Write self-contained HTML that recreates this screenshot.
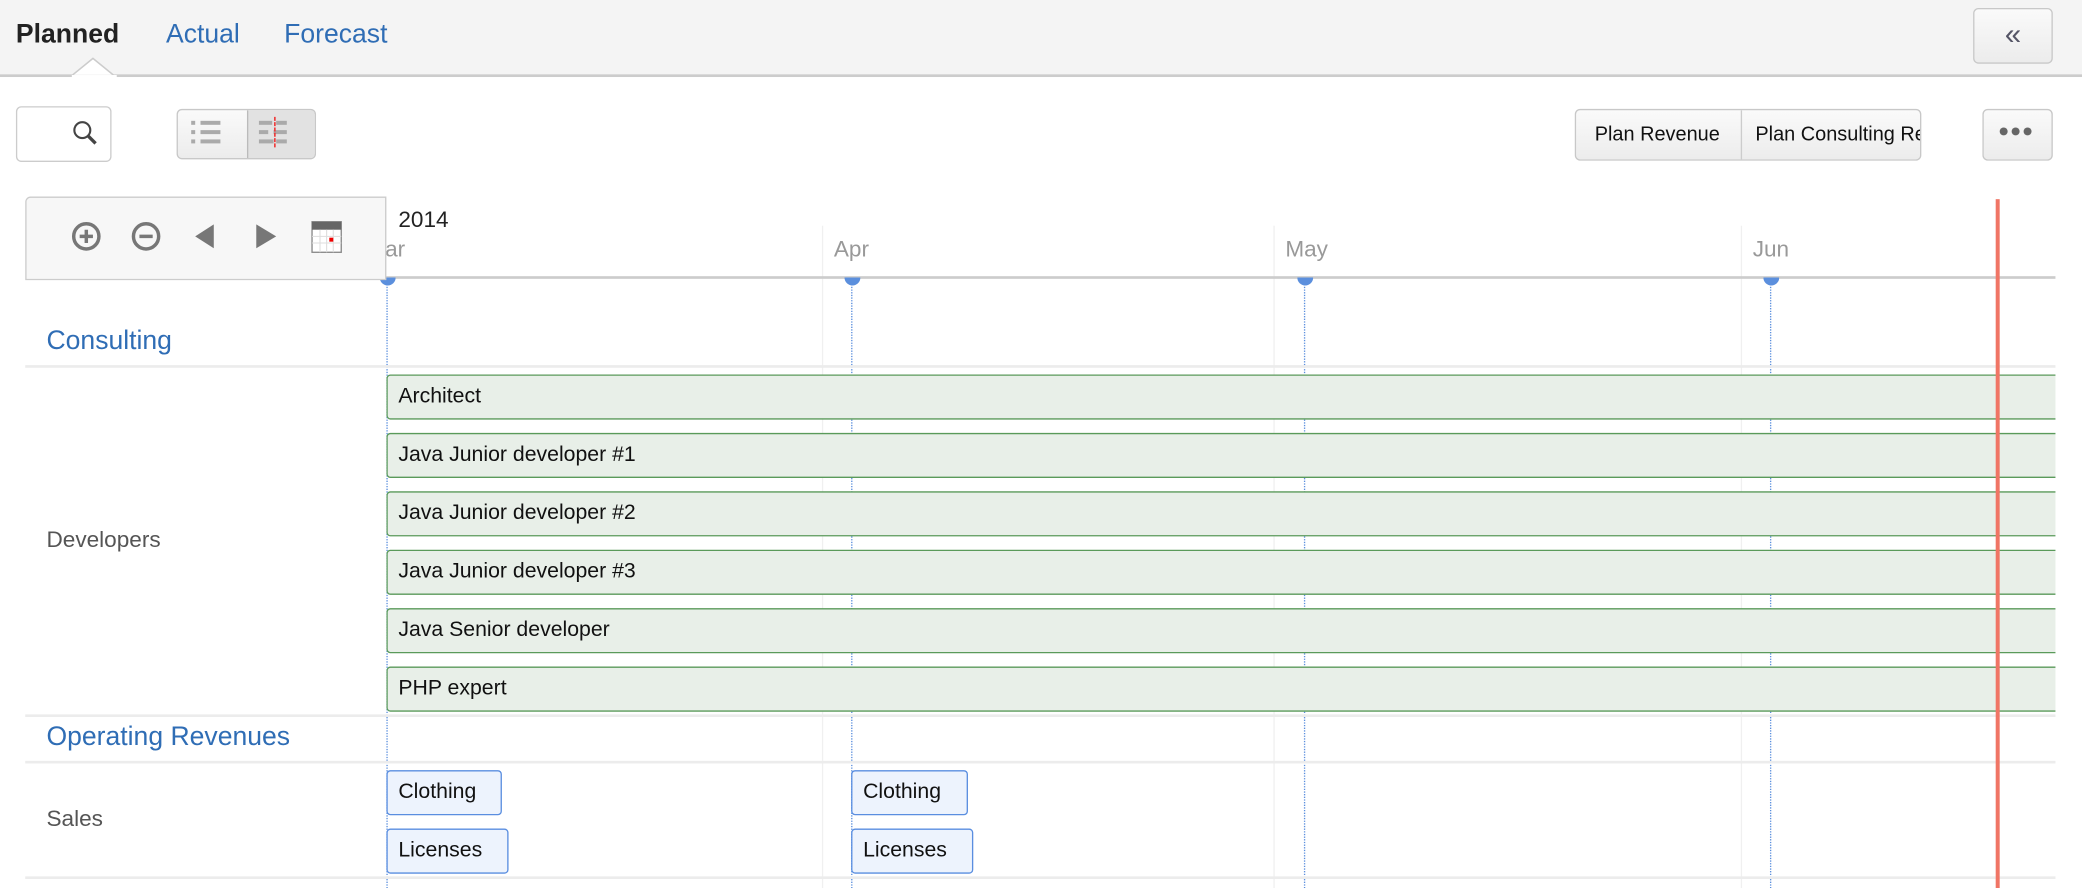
<!DOCTYPE html>
<html><head><meta charset="utf-8"><style>
html,body{margin:0;padding:0;width:2082px;height:888px;overflow:hidden;background:#fff;font-family:"Liberation Sans",Arial,sans-serif}
#w{position:absolute;left:0;top:0;width:1568px;height:669px;transform:scale(1.32781);transform-origin:0 0}
.a{position:absolute}
.btn{position:absolute;border:1px solid #c8c8c8;border-radius:4px;background:linear-gradient(#fafafa,#ececec);box-sizing:border-box}
.clip{position:absolute;left:291px;top:0;width:1257px;height:669px;overflow:hidden}
.bar{position:absolute;left:0;width:1290px;height:34px;box-sizing:border-box;border:1.5px solid #5a9a5a;border-radius:3px;background:#e8efe8;font-size:16px;line-height:31px;padding-left:8px;color:#111}
.sb{position:absolute;height:34px;box-sizing:border-box;border:1.5px solid #5a8ee0;border-radius:3px;background:#edf3fd;font-size:16px;line-height:31px;padding-left:8px;color:#111}
.hl{position:absolute;left:19px;width:1529px;height:2px;background:#ececec}
.mon{position:absolute;top:178px;font-size:17px;color:#999}
.vs{position:absolute;top:170px;width:1px;height:499px;background:#f0f0f0}
.dot{position:absolute;top:210px;width:1px;height:459px;border-left:1px dotted #5b8fdd}
.cir{position:absolute;top:203px;width:12px;height:12px;border-radius:50%;background:#5b8fdd}
</style></head><body><div id="w">
<div class="a" style="left:0;top:0;width:1568px;height:56px;background:#f4f4f4;border-bottom:2px solid #ccc"></div>
<svg class="a" style="left:54px;top:43px" width="34" height="16"><polygon points="0,14 16,1 32,14" fill="#fff" stroke="#ccc" stroke-width="1.2"/><rect x="0" y="13.5" width="34" height="3" fill="#fff"/></svg>
<div class="a" style="left:12px;top:15px;font-size:20px;font-weight:bold;color:#222">Planned</div>
<div class="a" style="left:125px;top:15px;font-size:20px;color:#2f6db5">Actual</div>
<div class="a" style="left:214px;top:15px;font-size:20px;color:#2f6db5">Forecast</div>
<div class="btn" style="left:1486px;top:6px;width:60px;height:42px;text-align:center;line-height:38px;font-size:22px;color:#556">«</div>

<div class="a" style="left:12px;top:80px;width:72px;height:42px;border:1px solid #ccc;border-radius:4px;box-sizing:border-box;background:#fff"></div>
<svg class="a" style="left:54px;top:90px" width="22" height="22"><circle cx="8" cy="8" r="6" fill="none" stroke="#444" stroke-width="1.6"/><line x1="12" y1="12" x2="18" y2="18" stroke="#444" stroke-width="2.5"/></svg>
<div class="btn" style="left:133px;top:82px;width:105px;height:38px;overflow:hidden">
<div class="a" style="left:52px;top:0;width:53px;height:38px;background:#e2e2e2;border-left:1px solid #bbb"></div></div>
<svg class="a" style="left:140px;top:86px" width="95" height="30">
<g fill="#aaa"><rect x="4" y="5" width="3" height="3"/><rect x="4" y="12" width="3" height="3"/><rect x="4" y="19" width="3" height="3"/><rect x="11" y="5" width="15" height="3"/><rect x="11" y="12" width="15" height="3"/><rect x="11" y="19" width="15" height="3"/>
<rect x="55" y="5" width="10" height="3"/><rect x="68" y="5" width="8" height="3"/><rect x="55" y="12" width="7" height="3"/><rect x="66" y="12" width="10" height="3"/><rect x="55" y="19" width="11" height="3"/><rect x="68" y="19" width="8" height="3"/></g>
<line x1="67" y1="2" x2="67" y2="25" stroke="#e33" stroke-width="1.2" stroke-dasharray="3,1"/></svg>

<div class="btn" style="left:1186px;top:82px;width:261px;height:39px;overflow:hidden;font-size:15px;color:#111">
<div class="a" style="left:14px;top:10px">Plan Revenue</div>
<div class="a" style="left:124px;top:0;width:1px;height:39px;background:#ccc"></div>
<div class="a" style="left:135px;top:10px;white-space:nowrap">Plan Consulting Revenue</div></div>
<div class="btn" style="left:1493px;top:82px;width:53px;height:39px"></div>
<svg class="a" style="left:1505px;top:94px" width="30" height="10"><g fill="#666"><circle cx="4" cy="5" r="3"/><circle cx="13" cy="5" r="3"/><circle cx="22" cy="5" r="3"/></g></svg>

<div class="vs" style="left:619px"></div><div class="vs" style="left:959px"></div><div class="vs" style="left:1311px"></div>
<div class="a" style="left:300px;top:156px;font-size:17px;color:#222">2014</div>
<div class="mon" style="left:290px">ar</div><div class="mon" style="left:628px">Apr</div><div class="mon" style="left:968px">May</div><div class="mon" style="left:1320px">Jun</div>
<div class="a" style="left:290px;top:208px;width:1258px;height:2px;background:#ccc"></div>
<div class="dot" style="left:291px"></div><div class="dot" style="left:641px"></div><div class="dot" style="left:982px"></div><div class="dot" style="left:1333px"></div>
<div class="cir" style="left:286px;clip-path:inset(6px 0 0 0)"></div><div class="cir" style="left:636px;clip-path:inset(6px 0 0 0)"></div><div class="cir" style="left:977px;clip-path:inset(6px 0 0 0)"></div><div class="cir" style="left:1328px;clip-path:inset(6px 0 0 0)"></div>

<div class="a" style="left:19px;top:148px;width:272px;height:63px;background:#f7f7f7;border:1px solid #ccc;border-radius:4px 0 0 0;box-sizing:border-box"></div>
<svg class="a" style="left:50px;top:163px" width="215" height="30">
<g fill="none" stroke="#777" stroke-width="2.6"><circle cx="15" cy="15" r="9.5"/><line x1="10" y1="15" x2="20" y2="15"/><line x1="15" y1="10" x2="15" y2="20"/><circle cx="60" cy="15" r="9.5"/><line x1="55" y1="15" x2="65" y2="15"/></g>
<polygon points="111,6 111,24 97,15" fill="#777"/><polygon points="143,6 143,24 158,15" fill="#777"/>
<rect x="185" y="4" width="22" height="23" fill="#fff" stroke="#888"/><rect x="185" y="4" width="22" height="6" fill="#666"/>
<g stroke="#ddd" stroke-width="0.8"><line x1="185" y1="15" x2="207" y2="15"/><line x1="185" y1="20" x2="207" y2="20"/><line x1="191" y1="10" x2="191" y2="27"/><line x1="196" y1="10" x2="196" y2="27"/><line x1="201" y1="10" x2="201" y2="27"/></g>
<rect x="198" y="16" width="3" height="3" fill="#e00"/></svg>

<div class="a" style="left:35px;top:246px;font-size:20px;color:#2f6db5">Consulting</div>
<div class="hl" style="top:275px"></div>
<div class="clip">
<div class="bar" style="top:282px">Architect</div>
<div class="bar" style="top:326px">Java Junior developer #1</div>
<div class="bar" style="top:370px">Java Junior developer #2</div>
<div class="bar" style="top:414px">Java Junior developer #3</div>
<div class="bar" style="top:458px">Java Senior developer</div>
<div class="bar" style="top:502px">PHP expert</div>
</div>
<div class="a" style="left:35px;top:397px;font-size:17px;color:#555">Developers</div>
<div class="hl" style="top:538px"></div>
<div class="a" style="left:35px;top:544px;font-size:20px;color:#2f6db5">Operating Revenues</div>
<div class="hl" style="top:573px"></div>
<div class="a" style="left:35px;top:607px;font-size:17px;color:#555">Sales</div>
<div class="sb" style="left:291px;top:580px;width:87px">Clothing</div>
<div class="sb" style="left:641px;top:580px;width:88px">Clothing</div>
<div class="sb" style="left:291px;top:624px;width:92px">Licenses</div>
<div class="sb" style="left:641px;top:624px;width:92px">Licenses</div>
<div class="hl" style="top:660px"></div>
<div class="a" style="left:1503px;top:150px;width:3px;height:519px;background:#f07565"></div>
</div></body></html>
